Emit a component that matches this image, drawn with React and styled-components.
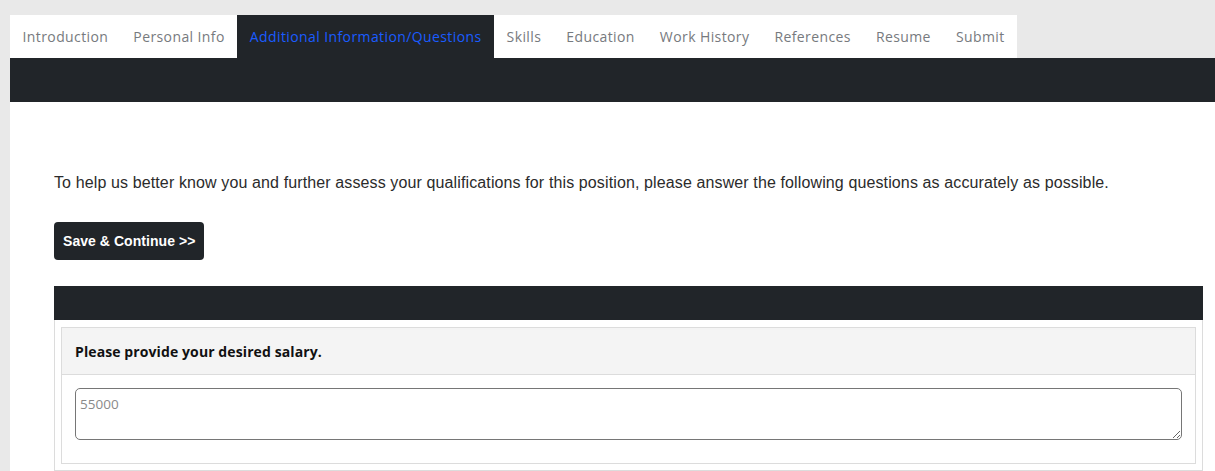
import React from "react";
import styled, { createGlobalStyle } from "styled-components";

const GlobalStyle = createGlobalStyle`
    body{
        margin: 0;
        background: #e9e9e9;
        font-family: "Liberation Sans", Arial, sans-serif;
        overflow: hidden;
    }
`;

const Page = styled.div`
    padding: 15px 0 0 10px;
`,
TabList = styled.ul`
    display: flex;
    margin: 0;
    padding: 0;
    list-style: none;
    width: max-content;
    background: white;
`,
Tab = styled.li`
    padding: 0 12.5px;
    height: 43px;
    display: flex;
    align-items: center;
    font-family: "Open Sans", sans-serif;
    font-size: 14px;
    letter-spacing: 0.4px;
    color: ${p => p.active ? "#1a5cff" : "#777a7e"};
    background: ${p => p.active ? "#212529" : "white"};
`,
DarkBar = styled.div`
    height: ${p => p.h}px;
    background: #212529;
`,
Content = styled.div`
    background: white;
    padding: 71px 12px 20px 44px;
    min-height: 400px;
`,
Intro = styled.p`
    margin: 0 0 29px;
    font-size: 16px;
    line-height: 20px;
    letter-spacing: 0.12px;
    color: #2b2b2b;
`,
SaveButton = styled.button`
    height: 38px;
    padding: 0 9px;
    border: none;
    border-radius: 4px;
    background: #212529;
    color: white;
    font-family: "Liberation Sans", Arial, sans-serif;
    font-size: 14px;
    font-weight: 600;
    letter-spacing: 0.05px;
    margin-bottom: 26px;
`,
Panel = styled.div`
    border: 1px solid #dcdcdc;
    border-top: none;
    padding: 7px 6px 6px;
`,
Question = styled.div`
    border: 1px solid #dcdcdc;
`,
QuestionHeader = styled.div`
    height: 46px;
    display: flex;
    align-items: center;
    padding: 0 13px;
    background: #f4f4f4;
    border-bottom: 1px solid #dcdcdc;
    font-family: "Open Sans", sans-serif;
    font-size: 14px;
    font-weight: 700;
    letter-spacing: 0.1px;
    color: #111;
`,
QuestionBody = styled.div`
    padding: 13px 13px 23px;
`,
Answer = styled.textarea`
    display: block;
    box-sizing: border-box;
    width: 100%;
    height: 52px;
    border: 1px solid #767676;
    border-radius: 5px;
    padding: 6px 4px;
    font-family: "Open Sans", sans-serif;
    font-size: 13.5px;
    resize: vertical;
    &::placeholder{
        color: #8a8a8a;
    }
`;

const tabs = ["Introduction", "Personal Info", "Additional Information/Questions", "Skills", "Education", "Work History", "References", "Resume", "Submit"];

const App = () => {
    return (
        <>
            <GlobalStyle/>
            <Page>
                <TabList>
                    {tabs.map(t => <Tab key={t} active={t === "Additional Information/Questions"}>{t}</Tab>)}
                </TabList>
                <DarkBar h={44}/>
                <Content>
                    <Intro>To help us better know you and further assess your qualifications for this position, please answer the following questions as accurately as possible.</Intro>
                    <SaveButton>Save &amp; Continue &gt;&gt;</SaveButton>
                    <DarkBar h={34}/>
                    <Panel>
                        <Question>
                            <QuestionHeader>Please provide your desired salary.</QuestionHeader>
                            <QuestionBody>
                                <Answer placeholder="55000"/>
                            </QuestionBody>
                        </Question>
                    </Panel>
                </Content>
            </Page>
        </>
    )
}
export default App;
